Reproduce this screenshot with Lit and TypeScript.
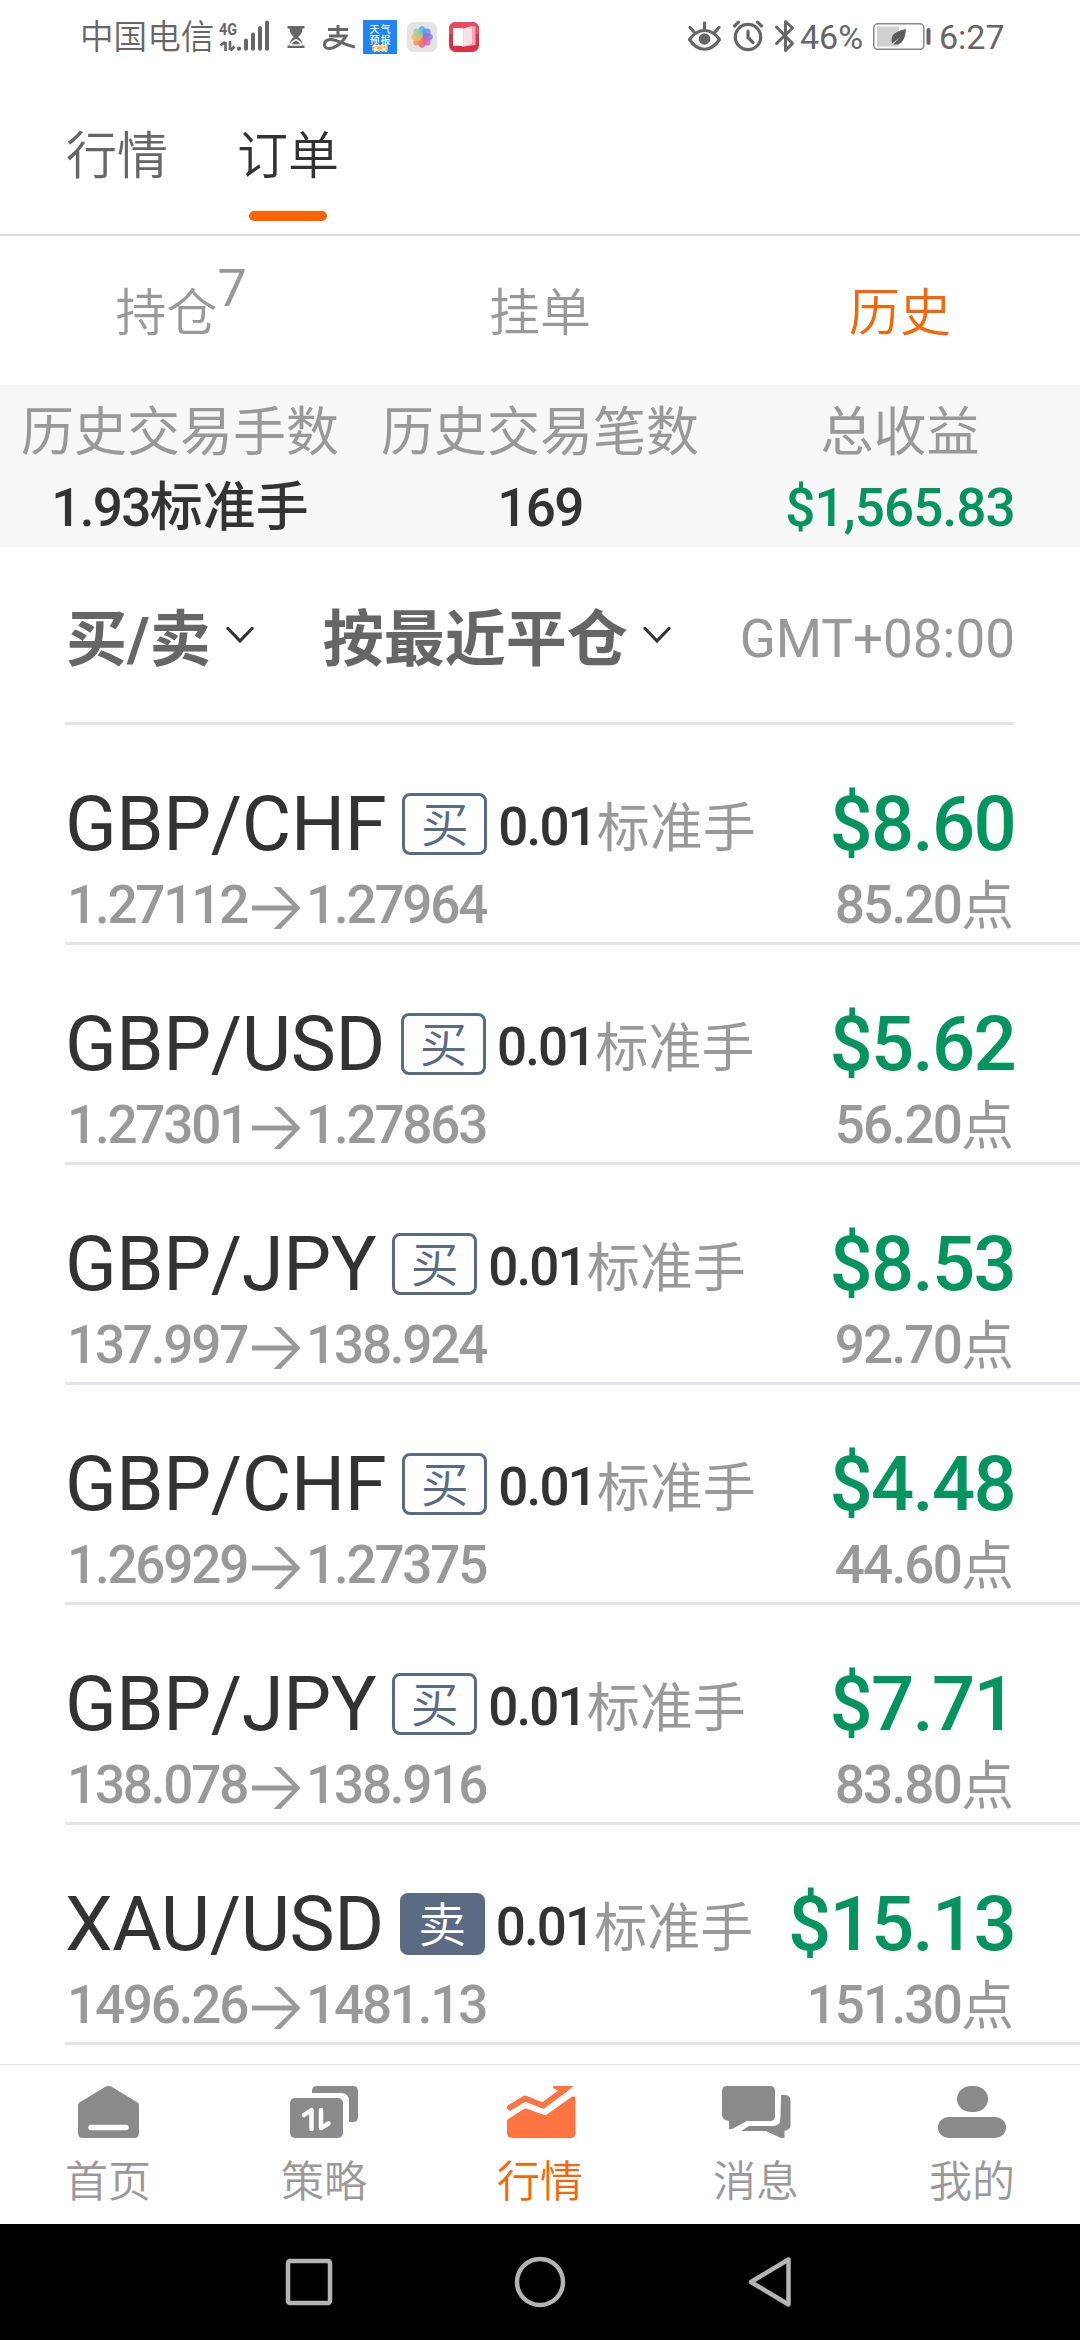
import { LitElement, html, css, svg } from "lit";
import { customElement, property } from "lit/decorators.js";

interface Order {
  symbol: string;
  side: "买" | "卖";
  open: string;
  close: string;
  profit: string;
  points: string;
}

const ORDERS: Order[] = [
  { symbol: "GBP/CHF", side: "买", open: "1.27112", close: "1.27964", profit: "$8.60", points: "85.20" },
  { symbol: "GBP/USD", side: "买", open: "1.27301", close: "1.27863", profit: "$5.62", points: "56.20" },
  { symbol: "GBP/JPY", side: "买", open: "137.997", close: "138.924", profit: "$8.53", points: "92.70" },
  { symbol: "GBP/CHF", side: "买", open: "1.26929", close: "1.27375", profit: "$4.48", points: "44.60" },
  { symbol: "GBP/JPY", side: "买", open: "138.078", close: "138.916", profit: "$7.71", points: "83.80" },
  { symbol: "XAU/USD", side: "卖", open: "1496.26", close: "1481.13", profit: "$15.13", points: "151.30" },
];

const petals = ["#3fb4ea", "#5b8def", "#8a6fe0", "#d062c4", "#ef5a72", "#f78a4e", "#f8b95a", "#9cc9a0"];

@customElement("status-bar")
class StatusBar extends LitElement {
  static styles = css`
    :host {
      display: flex;
      justify-content: space-between;
      height: 74px;
      padding: 0 77px 0 80px;
      color: #666;
      font-size: 34px;
      line-height: 74px;
    }
    .side { display: flex; }
    .carrier { width: 138px; font-size: 33.6px; font-weight: 350; line-height: 75px; }
    .percent { width: 70px; }
    .time { width: 64px; padding-left: 1px; }
    svg { display: block; flex: none; }
    .net { font: 700 17px/17px Roboto, sans-serif; }
    .tiny { font: 500 10px "Noto Sans CJK SC", sans-serif; letter-spacing: 1px; }
    .micro { font: 700 7px "Noto Sans CJK SC", sans-serif; }
  `;
  render() {
    return html`
      <div class="side">
        <span class="carrier">中国电信</span>
        <svg width="265" height="74" viewBox="218 0 265 74">
          <text class="net" x="219" y="35" fill="#666" textLength="18" lengthAdjust="spacingAndGlyphs">4G</text>
          <path d="M225.5 42V51M220.500 45.500L225 42M230 41V50M234.500 46.500L230.500 50.500" stroke="#666" stroke-width="2.6" fill="none" />
          <path d="M239 48.500V48.800M246 40.500V48.800M253 34.500V48.800M260 28V48.800M267 22.500V48.800" stroke="#666" stroke-width="4" stroke-linecap="round" />
          <path d="M287.500 26h17v2.500h-2c0 4-2 6.500-4.500 8.500c2.500 2 4.500 4.500 4.500 8.500h2V48h-17v-2.500h2c0-4 2-6.500 4.500-8.500c-2.500-2-4.500-4.500-4.500-8.500h-2z" fill="#666" />
          <path d="M290.500 45c.7-2.500 3-4 5.500-5.200c2.500 1.200 4.800 2.700 5.500 5.200z" fill="none" stroke="#fff" stroke-width="1.5" />
          <path d="M328 29.500H348M338 25V36M329 36H346C343 42 335 48.500 329 48.500C325.500 48.500 324 46.500 324.500 43.500C325 40.500 329 38.500 334 40C341 42 347 45.500 355 47" stroke="#666" stroke-width="3" fill="none" />
          <rect x="363" y="20" width="34" height="34" fill="#1f83fb" />
          <text class="tiny" x="369.500" y="32.500" fill="#fff">天气</text>
          <text class="tiny" x="369.500" y="43.500" fill="#fff">预报</text>
          <rect x="372" y="45" width="16" height="6" rx="1.500" fill="#f5b324" />
          <text class="micro" x="373" y="50.500" fill="#fff">实况</text>
          <rect x="407" y="22" width="30" height="30" rx="6.500" fill="#e4e4e4" />
          ${petals.map((c, i) => svg`<ellipse cx="422" cy="31.700" rx="4" ry="5.600" fill=${c} fill-opacity=".8" transform="rotate(${i * 45} 422 37)" />`)}
          <rect x="449" y="22" width="30" height="30" rx="6.500" fill="#d93246" />
          <path d="M449 34v-5.500a6.500 6.500 0 0 1 6.500-6.500h17a6.500 6.500 0 0 1 6.500 6.500V34z" fill="#e54c60" />
          <path d="M463.500 28.500l7-2.500l5 .5V45l-12 1.500z" fill="#f7a5b1" />
          <path d="M463.500 28.500l8.500-1.700V43.500l-8.500 3.300z" fill="#ffe1e5" />
          <path d="M453 28h8.500a2 2 0 0 1 2 2v16.800l-3-1H453z" fill="#fff" />
        </svg>
      </div>
      <div class="side">
        <svg width="113" height="74" viewBox="686 0 113 74">
          <g stroke="#666" fill="none" stroke-width="3.200" stroke-linecap="round" stroke-linejoin="round">
            <path d="M688.500 39.500C697 27.500 710 27.500 718.500 39.500C710 52.500 697 52.500 688.500 39.500Z" />
            <path d="M703.500 23v5.500M689 27.500l4 4.500M718 27.500l-4 4.500" />
            <circle cx="747" cy="37" r="12.700" />
            <path d="M747 31v6.500l5 5M733.500 26l4-3.800M760.500 26l-4-3.800" />
            <path d="M775.500 27l16 16.500l-7 7V21.500l7 6.500l-16 15.500" stroke-width="3" />
          </g>
          <circle cx="703.500" cy="39" r="5.800" fill="#666" />
        </svg>
        <span class="percent">46%</span>
        <svg width="68" height="74" viewBox="868 0 68 74">
          <rect x="871.800" y="23.800" width="50" height="25.500" rx="4" fill="none" stroke="#888" stroke-width="1.500" />
          <rect x="875" y="26.500" width="22" height="20" fill="#d0d0d0" />
          <path d="M904 29c-8 2-14.500 4-14.500 11.500c0 1 .2 2 .7 3l8.500-7l-7.500 8c8 1 12-4 12.800-15.500z" fill="#5c5c5c" />
          <rect x="924.500" y="28" width="4" height="17" rx="2" fill="#666" />
        </svg>
        <span class="time">6:27</span>
      </div>
    `;
  }
}

@customElement("order-row")
class OrderRow extends LitElement {
  @property({ attribute: false }) order!: Order;
  static styles = css`
    :host {
      display: block;
      box-sizing: border-box;
      height: 220px;
      margin-left: 65px;
      padding: 68px 66px 0 0;
      border-bottom: 3px solid #e4e5ea;
      white-space: nowrap;
    }
    .line { display: flex; align-items: center; height: 62px; line-height: 62px; }
    .prices { margin-top: 19px; color: #999; font-size: 53px; font-weight: 500; letter-spacing: -2.2px; padding-left: 2px; }
    .symbol { color: #333; font-size: 76px; letter-spacing: -0.4px; }
    .badge {
      box-sizing: border-box;
      width: 85px;
      height: 62px;
      margin-left: 16px;
      padding-top: 3px;
      border: 3px solid #5b6a83;
      border-radius: 8px;
      color: #5b6a83;
      font-size: 48px;
      font-weight: 350;
      line-height: 54px;
      text-align: center;
    }
    .sell { background: #5b6a83; color: #fff; }
    .volume { display: flex; margin-left: 11px; padding-top: 8px; font-size: 53px; color: #333; font-weight: 500; letter-spacing: -1.9px; }
    .unit { padding-top: 2px; color: #999; letter-spacing: 0; font-weight: 400; }
    .volume .unit { margin-left: 1px; }
    .profit { margin: 0 -1px 0 auto; color: #04945f; font-size: 76px; font-weight: 500; letter-spacing: -1.7px; }
    .points { display: flex; margin-left: auto; padding-top: 2px; letter-spacing: -1.8px; }
    .arrow { display: block; margin: 6px 5px 0 4px; }
  `;
  render() {
    const o = this.order;
    return html`
      <div class="line">
        <span class="symbol">${o.symbol}</span>
        <span class="badge ${o.side === "卖" ? "sell" : ""}">${o.side}</span>
        <span class="volume">0.01<span class="unit">标准手</span></span>
        <span class="profit">${o.profit}</span>
      </div>
      <div class="line prices">
        <span>${o.open}</span>
        <svg class="arrow" width="50" height="44" viewBox="0 0 50 44">
          <path d="M1 19.500H41.500L22.500 1H29.500L49.500 22L29.500 43H22.500L41.500 24.500H1Z" fill="#999" />
        </svg>
        <span>${o.close}</span>
        <span class="points">${o.points}<span class="unit">点</span></span>
      </div>
    `;
  }
}

const tabs = [
  {
    label: "首页",
    icon: svg`<path d="M8 19Q8 17.500 9.500 16.500L35 1Q38.500-1 42 1L67.500 16.500Q69 17.500 69 19V47Q69 52 64 52H13Q8 52 8 47Z" />
      <path d="M21 41.500H56" stroke="#fff" stroke-width="5.500" stroke-linecap="round" />`,
  },
  {
    label: "策略",
    icon: svg`<path d="M26 7V5Q26 0 31 0H67Q72 0 72 5V31Q72 36 67 36H63V15Q63 7 55 7Z" />
      <rect x="4" y="12" width="53" height="40" rx="5" />
      <path d="M18 29L25.500 24V43M35 24V42L42.500 37.500" fill="none" stroke="#fff" stroke-width="4.500" stroke-linecap="round" stroke-linejoin="round" />`,
  },
  {
    label: "行情",
    icon: svg`<path d="M5 34L22 23Q23.500 22 25 22.700L42 29Q44 29.500 45.500 28L69.500 11Q73.500 9 73.500 13V47Q73.500 52 68.500 52H10.500Q5 52 5 47Z" />
      <path d="M8 21.500L23 12.500L41 19.500L62 4" fill="none" stroke="currentColor" stroke-width="6" stroke-linecap="round" stroke-linejoin="round" />
      <path d="M51 0H71.500L64 6.500L55 5.500Q57 4 51.500 2.500Z" />`,
  },
  {
    label: "消息",
    icon: svg`<path d="M63 9H67Q72.500 9 72.500 15V40Q72.500 43 66.500 45V52H63L48 45H23L31 40H55Q62.500 40 62.500 32Z" />
      <path d="M9 0H52Q57 0 57 5V30Q57 35 52 35H29L14 43H11V35Q4 34 4 29V5Q4 0 9 0Z" />`,
  },
  {
    label: "我的",
    icon: svg`<rect x="23" y="0" width="31" height="26" rx="14" ry="13" /><rect x="4" y="31" width="68" height="21" rx="11" />`,
  },
];

@customElement("tab-bar")
class TabBar extends LitElement {
  static styles = css`
    :host { display: grid; grid-template-columns: repeat(5, 216px); box-sizing: border-box; height: 160px; border-top: 1px solid #e2e2e2; background: #fff; }
    .tab { display: flex; flex-direction: column; align-items: center; padding-top: 21px; color: #999; }
    svg { display: block; fill: #898a8c; }
    .label { margin-top: 14px; font-size: 43px; line-height: 60px; font-weight: 350; }
    .active { color: #f46708; }
    .active svg { fill: #fe7443; color: #fe7443; }
  `;
  render() {
    return tabs.map(
      (t) => html`<div class="tab ${t.label === "行情" ? "active" : ""}">
        <svg width="77" height="52" viewBox="0 0 77 52">${t.icon}</svg>
        <span class="label">${t.label}</span>
      </div>`
    );
  }
}

@customElement("app-root")
class AppRoot extends LitElement {
  static styles = css`
    :host {
      display: flex;
      flex-direction: column;
      width: 1080px;
      height: 2340px;
      overflow: hidden;
      background: #fff;
      font-family: Roboto, "Noto Sans CJK SC", sans-serif;
      white-space: nowrap;
    }
    .header { display: flex; gap: 69px; box-sizing: border-box; height: 162px; padding-left: 66px; border-bottom: 2px solid #dcdce0; font-size: 51px; font-weight: 350; color: #666; }
    .page { display: flex; flex-direction: column; align-items: center; padding-top: 53px; line-height: 60px; }
    .page.current { color: #333; }
    .page.current::after { content: ""; width: 78px; height: 10px; margin-top: 24px; border-radius: 5px; background: #ff6400; }
    .columns { display: grid; grid-template-columns: repeat(3, 360px); justify-items: center; }
    .filters { height: 149px; font-size: 51px; line-height: 60px; font-weight: 350; color: #999; }
    .filter { display: flex; padding-top: 48px; }
    .count { font-size: 52px; font-weight: 400; margin: -25px -2px 0 0; }
    .selected { color: #f46708; }
    .summary { height: 162px; background: #f7f7f7; }
    .stat { display: flex; flex-direction: column; align-items: center; font-size: 53px; }
    .caption { padding-top: 18px; line-height: 60px; color: #999; }
    .value { padding-top: 15px; line-height: 60px; color: #333; font-weight: 500; letter-spacing: -1.6px; }
    .gain { color: #04945f; letter-spacing: -0.9px; }
    .value .cjk { letter-spacing: 0; }
    .sort { display: flex; box-sizing: border-box; height: 178px; margin: 0 66px 0 65px; padding: 63px 0 0 1px; border-bottom: 3px solid #e4e5ea; font-size: 61px; line-height: 60px; font-weight: 700; color: #666; }
    .chevron { display: block; width: 28px; height: 18px; margin: 16px 69px 0 15px; }
    .zone { margin: -1px -1px 0 auto; font-size: 53px; font-weight: 400; color: #999; }
    .list { height: 1339px; overflow: hidden; }
    .system { display: flex; align-items: center; justify-content: center; gap: 180px; height: 116px; background: #000; }
    .system svg { display: block; }
  `;
  render() {
    const chevron = html`<svg class="chevron" viewBox="0 0 28 18"><path d="M2 2.500L14 15L26 2.500" fill="none" stroke="#333" stroke-width="3.200" stroke-linecap="round" /></svg>`;
    return html`
      <status-bar></status-bar>
      <div class="header">
        <div class="page">行情</div>
        <div class="page current">订单</div>
      </div>
      <div class="columns filters">
        <div class="filter">持仓<span class="count">7</span></div>
        <div class="filter">挂单</div>
        <div class="filter selected">历史</div>
      </div>
      <div class="columns summary">
        <div class="stat"><span class="caption">历史交易手数</span><span class="value">1.93<span class="cjk">标准手</span></span></div>
        <div class="stat"><span class="caption">历史交易笔数</span><span class="value">169</span></div>
        <div class="stat"><span class="caption">总收益</span><span class="value gain">$1,565.83</span></div>
      </div>
      <div class="sort">
        <span>买/卖</span>${chevron}<span>按最近平仓</span>${chevron}
        <span class="zone">GMT+08:00</span>
      </div>
      <div class="list">${ORDERS.map((o) => html`<order-row .order=${o}></order-row>`)}</div>
      <tab-bar></tab-bar>
      <div class="system">
        <svg width="50" height="52" viewBox="0 0 50 52"><rect x="4" y="5" width="42" height="42" rx="2" fill="none" stroke="#b4b4b4" stroke-width="4.500" /></svg>
        <svg width="52" height="52" viewBox="0 0 52 52"><circle cx="26" cy="26" r="23" fill="none" stroke="#b4b4b4" stroke-width="4.500" /></svg>
        <svg width="50" height="52" viewBox="0 0 50 52"><path d="M42.500 3.500V48.500L5 26Z" fill="none" stroke="#b4b4b4" stroke-width="4.500" stroke-linejoin="round" /></svg>
      </div>
    `;
  }
}
